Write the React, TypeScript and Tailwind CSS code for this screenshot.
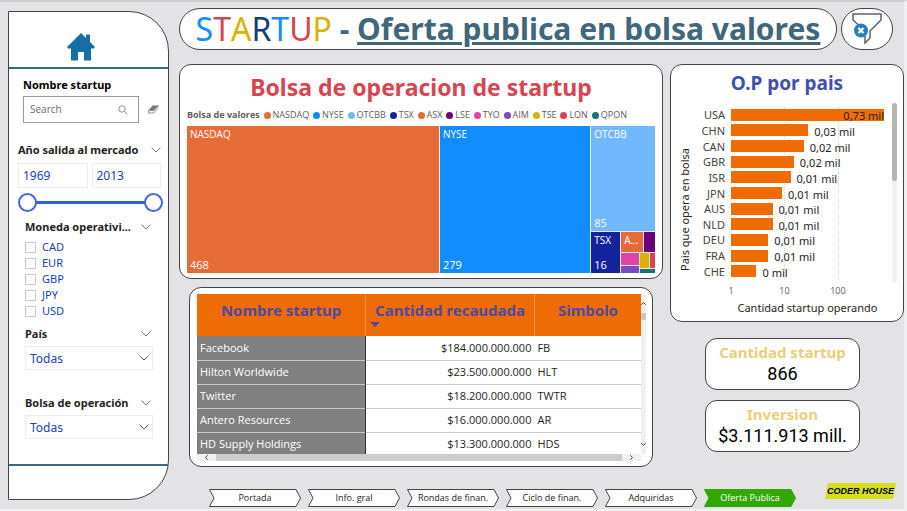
import { useState } from "react";
import type { ReactNode } from "react";

const exchanges = [
  { name: "NASDAQ", dot: "bg-[#e66c37]" },
  { name: "NYSE", dot: "bg-[#118dff]" },
  { name: "OTCBB", dot: "bg-[#70b8ff]" },
  { name: "TSX", dot: "bg-[#12239e]" },
  { name: "ASX", dot: "bg-[#e66c37]" },
  { name: "LSE", dot: "bg-[#6b007b]" },
  { name: "TYO", dot: "bg-[#e044a7]" },
  { name: "AIM", dot: "bg-[#744ec2]" },
  { name: "TSE", dot: "bg-[#d9b300]" },
  { name: "LON", dot: "bg-[#d64550]" },
  { name: "QPON", dot: "bg-[#197278]" },
];

const countries = [
  { code: "USA", count: 730, label: "0,73 mil" },
  { code: "CHN", count: 28, label: "0,03 mil" },
  { code: "CAN", count: 23, label: "0,02 mil" },
  { code: "GBR", count: 15, label: "0,02 mil" },
  { code: "ISR", count: 13, label: "0,01 mil" },
  { code: "JPN", count: 9, label: "0,01 mil" },
  { code: "AUS", count: 6, label: "0,01 mil" },
  { code: "NLD", count: 6, label: "0,01 mil" },
  { code: "DEU", count: 5, label: "0,01 mil" },
  { code: "FRA", count: 5, label: "0,01 mil" },
  { code: "CHE", count: 3, label: "0 mil" },
];

const companies = [
  ["Facebook", "$184.000.000.000", "FB"],
  ["Hilton Worldwide", "$23.500.000.000", "HLT"],
  ["Twitter", "$18.200.000.000", "TWTR"],
  ["Antero Resources", "$16.000.000.000", "AR"],
  ["HD Supply Holdings", "$13.300.000.000", "HDS"],
];

const pages = ["Portada", "Info. gral", "Rondas de finan.", "Ciclo de finan.", "Adquiridas", "Oferta Publica"];

const titleLetters = [
  ["S", "text-[#118dff]"],
  ["T", "text-[#d64550]"],
  ["A", "text-[#d9b300]"],
  ["R", "text-[#0f3f7a]"],
  ["T", "text-[#118dff]"],
  ["U", "text-[#d64550]"],
  ["P", "text-[#d9b300]"],
];

// Position on the logarithmic axis, in percent of the longest bar.
const logPercent = (n: number) => (Math.log10(n) / Math.log10(730)) * 100;

function Chevron({ className }: { className: string }) {
  return (
    <svg viewBox="0 0 10 6" className={className} fill="none" stroke="currentColor" aria-hidden="true">
      <path d="M0.5 0.5 5 5 9.5 0.5" />
    </svg>
  );
}

function SlicerTitle({ children }: { children: ReactNode }) {
  return (
    <div className="flex h-4 items-center justify-between">
      <h2 className="text-[11px] font-bold whitespace-nowrap text-[#252423]">{children}</h2>
      <Chevron className="mr-0.5 h-1.5 w-2.5 text-[#777]" />
    </div>
  );
}

function Dropdown({ label }: { label: string }) {
  return (
    <div className="mt-1 grid items-center">
      <select
        aria-label={label}
        className="col-start-1 row-start-1 h-6 w-full appearance-none border border-[#ececec] bg-white px-1 pt-0.5 text-xs text-[#1a41b8]"
      >
        <option>Todas</option>
      </select>
      <Chevron className="pointer-events-none col-start-1 row-start-1 mr-1 h-1.5 w-2.5 justify-self-end text-[#3a5fd0]" />
    </div>
  );
}

function YearRange() {
  const [from, setFrom] = useState(1969);
  const [to, setTo] = useState(2013);
  const range =
    "pointer-events-none col-start-1 row-start-1 m-0 h-5 w-full appearance-none bg-transparent [&::-webkit-slider-thumb]:pointer-events-auto [&::-webkit-slider-thumb]:size-[19px] [&::-webkit-slider-thumb]:appearance-none [&::-webkit-slider-thumb]:rounded-full [&::-webkit-slider-thumb]:border-2 [&::-webkit-slider-thumb]:border-[#4068dc] [&::-webkit-slider-thumb]:bg-white";
  const box = "h-[25px] w-full min-w-0 border border-[#ececec] px-1 text-xs text-[#1a41b8]";
  return (
    <div>
      <div className="mr-0.5 grid grid-cols-2 gap-1">
        <input aria-label="Desde" className={box} value={from} onChange={(e) => setFrom(Number(e.target.value))} />
        <input aria-label="Hasta" className={box} value={to} onChange={(e) => setTo(Number(e.target.value))} />
      </div>
      <div className="mt-1 grid items-center">
        <div className="col-start-1 row-start-1 mx-2 h-[3px] bg-[#3160dc]" />
        <input type="range" aria-label="Año inicial" min={1969} max={2013} value={from} onChange={(e) => setFrom(Number(e.target.value))} className={range} />
        <input type="range" aria-label="Año final" min={1969} max={2013} value={to} onChange={(e) => setTo(Number(e.target.value))} className={range} />
      </div>
    </div>
  );
}

function Sidebar() {
  return (
    <aside className="mt-[11px] ml-2 flex h-[489px] w-[161px] shrink-0 flex-col rounded-tr-[40px] rounded-br-[40px] border border-[#444] bg-white">
      <div className="flex h-[57px] shrink-0 items-end justify-center border-b-2 border-[#41677c] pr-4 pb-1.5">
        <button aria-label="Inicio" className="text-[#1570a6]">
          <svg viewBox="0 0 28 28" className="size-7" fill="currentColor" aria-hidden="true">
            <path d="M14 0 19 5V1.500h4V9l5 5-1 1.500h-3V27.500h-7V19h-6v8.500H4V15.500H1L0 14Z" />
          </svg>
        </button>
      </div>
      <div className="mt-2 ml-3.5">
        <label htmlFor="company" className="block text-[11px] leading-4 font-bold text-black">
          Nombre startup
        </label>
        <div className="mt-[3px] flex items-center gap-2">
          <div className="flex h-[27px] w-[116px] items-center border border-[#999] px-1.5">
            <input
              id="company"
              placeholder="Search"
              className="w-full min-w-0 font-['Open_Sans',sans-serif] text-[10px] outline-none placeholder:text-[#666]"
            />
            <svg viewBox="0 0 10 10" className="mr-1 size-2.5 shrink-0" fill="none" stroke="#777" strokeWidth=".8" aria-hidden="true">
              <circle cx="4" cy="4" r="3.200" />
              <path d="m6.300 6.300 3 3" />
            </svg>
          </div>
          <button aria-label="Borrar">
            <svg viewBox="0 0 12 9" className="h-[9px] w-3" aria-hidden="true">
              <path d="M5.500.5H11L7 5.500H1.500Z" fill="#777" />
              <path d="M1.500 5.500H7L11 .5v2L7 8H1.500Z" fill="#fff" stroke="#777" strokeWidth=".8" />
            </svg>
          </button>
        </div>
      </div>
      <div className="mt-[19px] mr-[5px] ml-[9px]">
        <SlicerTitle>Año salida al mercado</SlicerTitle>
        <div className="mt-[5px]">
          <YearRange />
        </div>
      </div>
      <div className="mt-[7px] mr-[15px] ml-4">
        <SlicerTitle>Moneda operativi...</SlicerTitle>
        <div className="mt-1">
          {["CAD", "EUR", "GBP", "JPY", "USD"].map((c) => (
            <label key={c} className="flex h-4 items-center gap-1.5 text-[11px] text-[#1a41b8]">
              <input type="checkbox" className="size-[11px] appearance-none border border-[#c8c8c8] bg-white checked:bg-[#3160dc]" />
              {c}
            </label>
          ))}
        </div>
      </div>
      <div className="mt-[7px] mr-[15px] ml-4">
        <SlicerTitle>País</SlicerTitle>
        <Dropdown label="País" />
      </div>
      <div className="mt-[25px] mr-[15px] ml-4">
        <SlicerTitle>Bolsa de operación</SlicerTitle>
        <Dropdown label="Bolsa de operación" />
      </div>
      <div className="mt-[25px] h-0.5 shrink-0 bg-[#41677c]" />
    </aside>
  );
}

function Tile({ name, value, className }: { name: string; value?: string; className: string }) {
  return (
    <div className={"flex min-w-0 basis-0 flex-col justify-between " + className}>
      <span className="px-[3px] text-[10px]">{name}</span>
      {value && <span className="px-[3px] text-[11px]">{value}</span>}
    </div>
  );
}

function Treemap() {
  return (
    <section className="h-[215px] rounded-xl border border-[#444] bg-white px-[7px] pt-1.5">
      <h2 className="text-center text-[23px] leading-8 font-bold text-[#d64550]">Bolsa de operacion de startup</h2>
      <div className="mt-1 flex h-4 items-center justify-between pr-7 font-['Open_Sans',sans-serif] text-[9px] whitespace-nowrap text-[#605e5c]">
        <span className="font-bold">Bolsa de valores</span>
        {exchanges.map((e) => (
          <span key={e.name} className="flex items-center gap-0.5">
            <i className={"size-[7px] rounded-full " + e.dot} />
            {e.name}
          </span>
        ))}
      </div>
      <div className="mt-[3px] flex h-[147px] gap-px bg-[#f4e6df] font-['Open_Sans',sans-serif] leading-4 text-white">
        <Tile name="NASDAQ" value="468" className="grow-[253] bg-[#e66c37]" />
        <Tile name="NYSE" value="279" className="grow-[151] bg-[#118dff]" />
        <div className="flex min-w-0 grow-[64] basis-0 flex-col gap-px">
          <Tile name="OTCBB" value="85" className="grow-[104] bg-[#70b8ff]" />
          <div className="flex grow-[41] basis-0 gap-px">
            <Tile name="TSX" value="16" className="grow-[29] bg-[#12239e]" />
            <div className="flex min-w-0 grow-[34] basis-0 flex-col gap-px">
              <div className="flex grow-[20] basis-0 gap-px">
                <Tile name="A..." className="grow-[22] bg-[#e66c37]" />
                <div className="min-w-0 grow-[11] basis-0 bg-[#6b007b]" />
              </div>
              <div className="flex grow-[20] basis-0 gap-px">
                <div className="flex grow-[18] basis-0 flex-col gap-px">
                  <div className="grow-[12] basis-0 bg-[#e044a7]" />
                  <div className="grow-[7] basis-0 bg-[#744ec2]" />
                </div>
                <div className="flex grow-[15] basis-0 flex-col gap-px">
                  <div className="flex grow-[15] basis-0 gap-px">
                    <div className="grow-[9] basis-0 bg-[#d9b300]" />
                    <div className="grow-[5] basis-0 bg-[#d64550]" />
                  </div>
                  <div className="grow-[4] basis-0 bg-[#197278]" />
                </div>
              </div>
            </div>
          </div>
        </div>
      </div>
    </section>
  );
}

function CompanyTable() {
  return (
    <section className="mx-2.5 mt-2 h-[180px] rounded-xl border border-[#444] bg-white py-1.5 pr-1.5 pl-[7px]">
      <div className="flex">
        <div className="h-[160px] flex-1 overflow-hidden">
          <table className="w-full table-fixed border-collapse">
            <thead>
              <tr className="h-[42px] bg-[#ef6c05] align-top text-[15px] leading-5 text-[#4b4ba0]">
                <th className="w-[38%] p-0 pt-1.5 font-bold whitespace-nowrap">Nombre startup</th>
                <th className="w-[38%] border-x border-[#f4914a] p-0 pt-1.5 font-bold whitespace-nowrap">
                  <button className="block w-full text-center">
                    Cantidad recaudada
                    <svg viewBox="0 0 10 5" className="mt-0.5 ml-1 h-[5px] w-2.5" fill="currentColor" aria-hidden="true">
                      <path d="M0 0h10L5 5Z" />
                    </svg>
                  </button>
                </th>
                <th className="p-0 pt-1.5 font-bold">Simbolo</th>
              </tr>
            </thead>
            <tbody className="font-['Open_Sans',sans-serif] text-[11px] text-[#252423]">
              {companies.map(([name, amount, symbol]) => (
                <tr key={name} className="h-6 border-b border-[#c8c8c8]">
                  <td className="border-r border-[#333] bg-[#808080] p-0 pl-[3px] text-white">{name}</td>
                  <td className="p-0 pr-[3px] text-right">{amount}</td>
                  <td className="p-0 pl-[3px]">{symbol}</td>
                </tr>
              ))}
            </tbody>
          </table>
        </div>
        <div className="flex w-[5px] flex-col items-center justify-between bg-[#f0f0f0] py-2 text-[#444]">
          <div className="flex w-full flex-col items-center gap-2">
            <Chevron className="h-[3px] w-[5px] rotate-180 stroke-2" />
            <div className="h-[7px] w-full bg-[#c8c8c8]" />
          </div>
          <Chevron className="h-[3px] w-[5px] stroke-2" />
        </div>
      </div>
      <div className="mr-[5px] flex h-[7px] items-center bg-[#f0f0f0] text-[#444]">
        <Chevron className="mx-[7px] h-[3px] w-[5px] rotate-90 stroke-2" />
        <div className="h-full flex-1 bg-[#cdcdcd]" />
        <Chevron className="mx-[7px] h-[3px] w-[5px] -rotate-90 stroke-2" />
      </div>
    </section>
  );
}

function CountryChart() {
  return (
    <section className="h-[258px] rounded-xl border border-[#444] bg-white pt-1">
      <h2 className="text-center text-[19px] leading-7 font-bold text-[#414fb1]">O.P por pais</h2>
      <div className="mt-1.5 flex">
        <div className="flex w-6 items-center justify-center pl-1">
          <span className="rotate-180 text-[11px] leading-4 whitespace-nowrap text-[#252423] [writing-mode:vertical-rl]">
            Pais que opera en bolsa
          </span>
        </div>
        <div className="flex-1 pr-2 pl-0.5">
          <div className="mt-1 flex h-[172px]">
            <ul className="flex w-7 flex-col text-[11px] text-[#444]">
              {countries.map((c) => (
                <li key={c.code} className="flex flex-1 items-center justify-end leading-none">
                  {c.code}
                </li>
              ))}
            </ul>
            <div className="relative ml-1.5 flex flex-1 flex-col">
              <div className="absolute inset-y-0 border-l border-dotted border-[#d5d5d5]" style={{ left: logPercent(10) + "%" }} />
              <div className="absolute inset-y-0 border-l border-dotted border-[#d5d5d5]" style={{ left: logPercent(100) + "%" }} />
              {countries.map((c, i) => (
                <div key={c.code} className="relative flex flex-1 items-center text-[11px] leading-none whitespace-nowrap text-[#252423]">
                  <div className="flex h-3 shrink-0 items-center justify-end bg-[#ef6c05]" style={{ width: logPercent(c.count) + "%" }}>
                    {i === 0 && <span className="pt-0.5">{c.label}</span>}
                  </div>
                  {i > 0 && <span className="pt-0.5 pl-1.5">{c.label}</span>}
                </div>
              ))}
            </div>
          </div>
          <div className="relative mt-1.5 ml-[34px] h-3 font-['Open_Sans',sans-serif] text-[9px] leading-3 text-[#605e5c]">
            {[1, 10, 100].map((n) => (
              <span key={n} className="absolute -translate-x-1/2" style={{ left: logPercent(n) + "%" }}>
                {n}
              </span>
            ))}
          </div>
          <p className="mt-[3px] ml-[34px] text-center text-[11px] leading-4 whitespace-nowrap text-[#252423]">
            Cantidad startup operando
          </p>
        </div>
        <div className="mr-1.5 h-[180px] w-[5px] rounded-full bg-[#f0f0f0]">
          <div className="h-[78px] rounded-full bg-[#b5b5b5]" />
        </div>
      </div>
    </section>
  );
}

function Kpi({ title, value }: { title: string; value: string }) {
  return (
    <section className="flex h-[52px] flex-col items-center justify-center rounded-xl border border-[#444] bg-white whitespace-nowrap">
      <h2 className="text-[15px] leading-5 font-bold text-[#e8d07a]">{title}</h2>
      <p className="font-[Roboto,sans-serif] text-lg leading-6 text-black">{value}</p>
    </section>
  );
}

function PageNav() {
  return (
    <nav className="mt-[22px] ml-[30px] flex gap-[7px]">
      {pages.map((p) => {
        const active = p === "Oferta Publica";
        return (
          <button key={p} aria-current={active ? "page" : undefined} className="grid h-[18px] w-[92px] items-center">
            <svg viewBox="0 0 92 18" preserveAspectRatio="none" className="col-start-1 row-start-1 h-full w-full" aria-hidden="true">
              <path
                d="M.5.5H87L91.500 9 87 17.500H.5L5 9Z"
                fill={active ? "#31a800" : "#fff"}
                stroke={active ? "#31a800" : "#444"}
              />
            </svg>
            <span
              className={
                "col-start-1 row-start-1 text-center font-['Open_Sans',sans-serif] text-[9px] whitespace-nowrap " +
                (active ? "text-white" : "text-[#252423]")
              }
            >
              {p}
            </span>
          </button>
        );
      })}
    </nav>
  );
}

export default function App() {
  return (
    <div className="flex min-h-screen flex-col justify-between border-t-2 border-r-3 border-t-[#cfcfd0] border-r-[#f0f0f0] bg-[#e3e3e5] font-['Comic_Sans_MS','Noto_Sans',sans-serif]">
      <div className="-mt-0.5 flex gap-2.5">
        <Sidebar />
        <div className="min-w-0 flex-1 pt-2">
          <header className="flex items-center gap-1 pr-[11px]">
            <h1 className="flex h-[42px] flex-1 items-center justify-center rounded-full border border-[#444] bg-white text-[30px] leading-none whitespace-pre">
              <span className="flex text-[32px]">
                {titleLetters.map(([l, color], i) => (
                  <span key={i} className={color}>
                    {l}
                  </span>
                ))}
              </span>
              <span className="font-bold text-[#41677c]"> - </span>
              <span className="font-bold text-[#41677c] underline">Oferta publica en bolsa valores</span>
            </h1>
            <button aria-label="Quitar filtros" className="flex h-[42px] w-[52px] items-center justify-center rounded-full border border-[#444] bg-white">
              <svg viewBox="0 0 30 32" className="h-8 w-[30px]" fill="none" aria-hidden="true">
                <path d="M1 1h28v6L18 18v7l-5 5V18L1 7Z" stroke="#5a6470" strokeWidth="1.500" />
                <circle cx="9" cy="17.500" r="7" fill="#2a7ec4" />
                <path d="m6.500 15 5 5m0-5-5 5" stroke="#fff" strokeWidth="2.200" />
              </svg>
            </button>
          </header>
          <div className="mt-3.5 flex gap-[7px]">
            <div className="min-w-0 flex-1">
              <Treemap />
              <CompanyTable />
            </div>
            <div className="w-[234px] shrink-0">
              <CountryChart />
              <div className="mt-4 mr-[44px] ml-[35px] flex flex-col gap-2.5">
                <Kpi title="Cantidad startup" value="866" />
                <Kpi title="Inversion" value="$3.111.913 mill." />
              </div>
            </div>
          </div>
          <div className="flex items-start justify-between pr-2">
            <PageNav />
            <div className="mt-4 bg-[#d6de1e] px-0.5 font-['Liberation_Sans_Narrow','Liberation_Sans',sans-serif] text-[9px] leading-4 font-bold whitespace-nowrap text-black italic [clip-path:polygon(4%_0,100%_0,96%_100%,0_100%)]">
              CODER HOUSE
            </div>
          </div>
        </div>
      </div>
      <div className="h-0.5 bg-[#f3f3f3]" />
    </div>
  );
}
